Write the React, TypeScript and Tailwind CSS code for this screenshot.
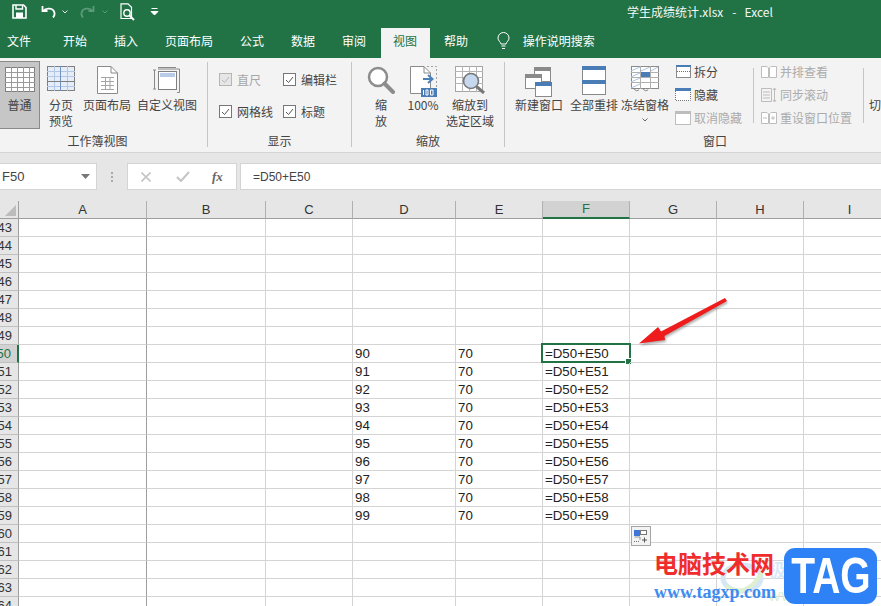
import React from "react";

const cjk = "font-['Microsoft_YaHei','Noto_Sans_CJK_SC',sans-serif]";

const tabs = ["开始", "插入", "页面布局", "公式", "数据", "审阅"];

const columns = [
  { name: "A", w: "w-[128px]", line: "border-[#9e9e9e]" },
  { name: "B", w: "w-[119px]", line: "border-[#d4d4d4]" },
  { name: "C", w: "w-[87px]", line: "border-[#d4d4d4]" },
  { name: "D", w: "w-[103px]", line: "border-[#d4d4d4]" },
  { name: "E", w: "w-[87px]", line: "border-[#d4d4d4]" },
  { name: "F", w: "w-[87px]", line: "border-[#d4d4d4]" },
  { name: "G", w: "w-[87px]", line: "border-[#d4d4d4]" },
  { name: "H", w: "w-[87px]", line: "border-[#d4d4d4]" },
  { name: "I", w: "w-[92px]", line: "border-[#d4d4d4]" },
];

const rows = Array.from({ length: 22 }, (_, i) => 43 + i);

const cellText = (col: string, row: number) => {
  if (row < 50 || row > 59) return "";
  if (col === "D") return String(row + 40);
  if (col === "E") return "70";
  if (col === "F") return `=D50+E${row}`;
  return "";
};

const GridIcon = () => (
  <svg width="30" height="25" viewBox="0 0 30 25">
    <rect x="0.5" y="0.5" width="29" height="24" fill="#fff" stroke="#7f7f7f" />
    {[5, 10, 15, 20].map((y) => (
      <path key={y} d={`M0 ${y}.5H30`} stroke="#9a9a9a" />
    ))}
    {[6, 12, 18, 24].map((x) => (
      <path key={x} d={`M${x}.5 0V25`} stroke="#9a9a9a" />
    ))}
  </svg>
);

const BreakIcon = () => (
  <svg width="28" height="25" viewBox="0 0 28 25">
    <rect x="0.5" y="0.5" width="27" height="24" fill="#e4edf8" stroke="#7f7f7f" />
    {[5, 10, 15, 20].map((y) => (
      <path key={y} d={`M0 ${y}.5H28`} stroke="#b3c7e4" />
    ))}
    {[7, 20].map((x) => (
      <path key={x} d={`M${x}.5 0V25`} stroke="#b3c7e4" />
    ))}
    <path d="M13.5 0V25" stroke="#6f93c6" />
    <path d="M0 15.5H28" stroke="#7f7f7f" />
  </svg>
);

const LayoutIcon = () => (
  <svg width="21" height="28" viewBox="0 0 21 28">
    <path d="M.5.5H14L20.5 7V27.5H.5Z" fill="#fff" stroke="#8a8a8a" />
    <path d="M14 .5V7H20.5" fill="none" stroke="#8a8a8a" />
    <path d="M4 11.5H17M4 15.5H17M4 19.5H17M4 23.5H17M8.5 11V24M13 11V24" stroke="#a5a5a5" />
  </svg>
);

const CustomIcon = () => (
  <svg width="28" height="28" viewBox="0 0 28 28">
    <path d="M5 1.5H23M1.5 4V23M.0 4H3M0 23H3M5 3H26.5V26.5H24" fill="none" stroke="#8a8a8a" />
    <rect x="5.5" y="5.5" width="18" height="18" fill="#fff" stroke="#7f7f7f" />
    <rect x="7" y="7" width="15" height="4" fill="#b8cce8" />
  </svg>
);

const Magnifier = () => (
  <svg width="28" height="28" viewBox="0 0 28 28">
    <circle cx="11" cy="11" r="9" fill="#fff" stroke="#8c8c8c" strokeWidth="2.5" />
    <path d="M17.5 17.5L26 26" stroke="#8c8c8c" strokeWidth="4" strokeLinecap="round" />
  </svg>
);

const HundredIcon = () => (
  <svg width="27" height="31" viewBox="0 0 27 31">
    <path d="M.5.5H14L20.5 7V27.5H.5Z" fill="#fff" stroke="#8a8a8a" />
    <path d="M14 .5V7H20.5" fill="none" stroke="#8a8a8a" />
    <path d="M17 .5H26.5V22" fill="none" stroke="#a0a0a0" strokeDasharray="2 2" />
    <path d="M13 13H21M18 9L22.5 13L18 17" fill="none" stroke="#4a7fb8" strokeWidth="2" />
    <rect x="11" y="22" width="16" height="9" fill="#4a7db5" />
    <path d="M13.5 24V29M16 24H18V29H16ZM20.5 24H23V29H20.5Z" fill="none" stroke="#fff" />
  </svg>
);

const ZoomSelIcon = () => (
  <svg width="30" height="28" viewBox="0 0 30 28">
    <rect x="0.5" y="0.5" width="27" height="25" fill="#fff" stroke="#a5a5a5" />
    <path d="M0 5.5H28M0 11.5H28M0 17.5H28M7.5 0V26M14.5 0V26M21.5 0V26" stroke="#b5b5b5" />
    <circle cx="16" cy="15" r="7.5" fill="#c5d8ee" stroke="#777" strokeWidth="1.6" />
    <path d="M21.5 20.5L29 27" stroke="#777" strokeWidth="3" />
  </svg>
);

const NewWinIcon = () => (
  <svg width="28" height="31" viewBox="0 0 28 31">
    <rect x="9.5" y="1.5" width="16" height="14" fill="#fff" stroke="#8a8a8a" />
    <rect x="9" y="1" width="17" height="4" fill="#8a8a8a" />
    <rect x="0.5" y="8.5" width="16" height="14" fill="#fff" stroke="#8a8a8a" />
    <rect x="0" y="8" width="17" height="4" fill="#8a8a8a" />
    <rect x="10.5" y="16.5" width="16" height="14" fill="#fff" stroke="#8a8a8a" />
    <rect x="10" y="16" width="17" height="4" fill="#4a7db5" />
  </svg>
);

const ArrangeIcon = () => (
  <svg width="24" height="29" viewBox="0 0 24 29">
    <rect x="0.5" y="0.5" width="23" height="28" fill="#fff" stroke="#8a8a8a" />
    <rect x="0" y="0" width="24" height="4" fill="#4a7db5" />
    <rect x="0" y="14" width="24" height="4" fill="#4a7db5" />
  </svg>
);

const FreezeIcon = () => (
  <svg width="28" height="26" viewBox="0 0 28 26">
    <rect x="0.5" y="0.5" width="27" height="22" fill="#fff" stroke="#8a8a8a" />
    <path d="M0 6.5H28M0 11.5H28M0 16.5H28M9.5 0V23M19.5 0V23" stroke="#b0b0b0" />
    <path d="M0 5L9 1M0 11L9 7M0 16L9 12M0 22L9 18M10 5L19 1M20 5L27 1" stroke="#a9c2e0" />
    <rect x="10" y="6" width="9" height="5" fill="#4a7db5" />
    <path d="M3 23Q5 26 8 24M12 23Q14 26 17 24" fill="none" stroke="#8a8a8a" />
  </svg>
);

const SplitIcon = () => (
  <svg width="15" height="13" viewBox="0 0 15 13">
    <rect x="0.5" y="0.5" width="14" height="12" fill="#fff" stroke="#8a8a8a" />
    <rect x="0" y="0" width="15" height="2" fill="#4a7db5" />
    <path d="M1 6.5H14" stroke="#4a7db5" strokeDasharray="1 1" />
  </svg>
);

const HideIcon = () => (
  <svg width="16" height="13" viewBox="0 0 16 13">
    <path d="M.5 3V12.5H15.5V3" fill="#fff" stroke="#777" strokeDasharray="1 1" />
    <rect x="0" y="0" width="16" height="3" fill="#4a7db5" />
  </svg>
);

const UnhideIcon = () => (
  <svg width="16" height="14" viewBox="0 0 16 14">
    <rect x="0.5" y="0.5" width="15" height="13" fill="#fff" stroke="#bdbdbd" />
    <rect x="0" y="0" width="16" height="3" fill="#bdbdbd" />
  </svg>
);

const SideBySideIcon = () => (
  <svg width="16" height="12" viewBox="0 0 16 12">
    <path d="M.5.5H6L7.5 2V11.5H.5ZM8.5 2L10 .5H15.5V11.5H8.5Z" fill="#fff" stroke="#bdbdbd" />
  </svg>
);

const SyncIcon = () => (
  <svg width="16" height="14" viewBox="0 0 16 14">
    <path d="M.5.5H10.5V13.5H.5ZM2 4H9M2 7H9M2 10H9" fill="none" stroke="#bdbdbd" />
    <path d="M13.5 0V14M12 2L13.5 0L15 2M12 12L13.5 14L15 12" fill="none" stroke="#bdbdbd" />
  </svg>
);

const ResetIcon = () => (
  <svg width="16" height="12" viewBox="0 0 16 12">
    <path d="M.5.5H6L7.5 2V11.5H.5ZM8.5 2L10 .5H15.5V11.5H8.5Z" fill="#fff" stroke="#bdbdbd" />
    <path d="M2 6H6M10 6H14M12 4V8" stroke="#bdbdbd" />
  </svg>
);

const Check = ({ label, off }: { label: string; off?: boolean }) => (
  <div className={`flex items-center gap-[5px] h-[13px] ${off ? "text-[#a6a6a6]" : "text-[#444]"}`}>
    <span className={`w-[13px] h-[13px] border flex items-center justify-center ${off ? "border-[#b5b5b5] bg-[#e6e6e6]" : "border-[#777] bg-white"}`}>
      <svg width="9" height="8" viewBox="0 0 9 8">
        <path d="M1 4L3.5 6.5L8 1" fill="none" stroke={off ? "#b5b5b5" : "#555"} />
      </svg>
    </span>
    <span className="whitespace-nowrap">{label}</span>
  </div>
);

const Big = ({ w, icon, label }: { w: string; icon: React.ReactNode; label: React.ReactNode }) => (
  <div className={`${w} shrink-0 flex flex-col items-center pt-[4px]`}>
    <div className="h-[30px] flex items-start justify-center">{icon}</div>
    <div className="text-center leading-[16px] mt-[1px] whitespace-nowrap">{label}</div>
  </div>
);

const Small = ({ icon, label, off }: { icon: React.ReactNode; label: string; off?: boolean }) => (
  <div className={`flex items-center gap-[3px] h-[23px] whitespace-nowrap ${off ? "text-[#ababab]" : "text-[#444]"}`}>
    <span className="w-[16px] flex justify-center">{icon}</span>
    <span>{label}</span>
  </div>
);

const Group = ({ w, label, labelPad = "", children, sep = true }: { w: string; label: string; labelPad?: string; children: React.ReactNode; sep?: boolean }) => (
  <div className={`${w} shrink-0 h-[85px] mt-[4px] flex flex-col ${sep ? "border-r border-[#c6c6c6]" : ""}`}>
    <div className="flex-1 flex min-h-0">{children}</div>
    <div className={`text-center leading-[16px] h-[16px] mb-[-2px] text-[#444] ${labelPad}`}>{label}</div>
  </div>
);

export default function App() {
  return (
    <div className={`relative w-[881px] h-[606px] overflow-hidden bg-[#e6e6e6] text-[12px] ${cjk}`}>
      {/* title bar */}
      <div className="h-[28px] pb-[5px] bg-[#217346] flex items-center text-white">
        <div className="w-[627px] shrink-0 flex items-center h-full">
          <svg className="ml-[12px]" width="15" height="15" viewBox="0 0 15 15">
            <path d="M1 1H11.5L14 3.5V14H1Z" fill="none" stroke="#fff" strokeWidth="1.6" />
            <path d="M4 1V5H10.5V1" fill="none" stroke="#fff" strokeWidth="1.4" />
            <rect x="4" y="8.5" width="7" height="5.5" fill="#fff" />
          </svg>
          <svg className="ml-[14px]" width="15" height="13" viewBox="0 0 15 13">
            <path d="M1.5 1V6H6.5" fill="none" stroke="#fff" strokeWidth="1.8" />
            <path d="M2 6C5 2.5 12.5 2.5 13.5 8C13.8 10 13 11.5 12 12.5" fill="none" stroke="#fff" strokeWidth="1.8" />
          </svg>
          <svg className="ml-[6px]" width="6" height="4" viewBox="0 0 6 4">
            <path d="M.5.5L3 3L5.5.5" fill="none" stroke="#dfe9e3" />
          </svg>
          <svg className="ml-[12px]" width="15" height="13" viewBox="0 0 15 13">
            <path d="M13.5 1V6H8.5" fill="none" stroke="#5d9a78" strokeWidth="1.8" />
            <path d="M13 6C10 2.5 2.5 2.5 1.5 8C1.2 10 2 11.5 3 12.5" fill="none" stroke="#5d9a78" strokeWidth="1.8" />
          </svg>
          <svg className="ml-[7px]" width="6" height="4" viewBox="0 0 6 4">
            <path d="M.5.5L3 3L5.5.5" fill="none" stroke="#5d9a78" />
          </svg>
          <svg className="ml-[12px]" width="15" height="18" viewBox="0 0 15 18">
            <path d="M1 .8H8L11.5 4.3V15.5H1Z" fill="none" stroke="#fff" strokeWidth="1.2" />
            <circle cx="7" cy="10" r="3.2" fill="none" stroke="#fff" strokeWidth="1.4" />
            <path d="M9.5 12.5L14 17" stroke="#fff" strokeWidth="1.8" />
          </svg>
          <svg className="ml-[15px]" width="9" height="8" viewBox="0 0 9 8">
            <path d="M1.5 .5H7.5M1 3.5H8L4.5 7Z" fill="#fff" stroke="#fff" />
          </svg>
        </div>
        <div className="whitespace-nowrap flex text-[#f2f7f4]">
          <span>学生成绩统计.xlsx</span>
          <span className="ml-[9px]">-</span>
          <span className="ml-[8px]">Excel</span>
        </div>
      </div>

      {/* tab strip */}
      <div className="h-[30px] bg-[#217346] flex items-stretch gap-[2px] text-white">
        <div className="w-[48.5px] pl-[7px] pt-[4px] leading-[18px]">文件</div>
        {tabs.map((t) => (
          <div key={t} className="px-[12.5px] pt-[4px] leading-[18px]">{t}</div>
        ))}
        <div className="px-[12.5px] pt-[4px] leading-[18px] bg-[#f3f3f3] text-[#217346]">视图</div>
        <div className="px-[12.5px] pt-[4px] leading-[18px]">帮助</div>
        <div className="flex items-start pt-[4px] ml-[14px] gap-[13px]">
          <svg width="13" height="18" viewBox="0 0 13 18">
            <path d="M4 12C3.5 9.5 1 9 1 6A5.5 5.5 0 0 1 12 6C12 9 9.5 9.5 9 12ZM4.5 14H8.5M5 16.5H8" fill="none" stroke="#fff" />
          </svg>
          <span className="leading-[18px]">操作说明搜索</span>
        </div>
      </div>

      {/* ribbon */}
      <div className="h-[95px] bg-[#f3f3f3] border-b border-[#d4d4d4] flex text-[#444]">
        <Group w="w-[208px]" label="工作簿视图" labelPad="pr-[12px]">
          <div className="w-[40px] shrink-0 -mt-[1px] h-[68px] bg-[#c6c6c6] border border-[#8a8a8a] border-l-0 flex flex-col items-center pt-[5px]">
            <GridIcon />
            <div className="mt-[5px] leading-[16px]">普通</div>
          </div>
          <Big w="w-[42px]" icon={<BreakIcon />} label={<>分页<br />预览</>} />
          <Big w="w-[50px]" icon={<LayoutIcon />} label="页面布局" />
          <Big w="w-[70px]" icon={<CustomIcon />} label="自定义视图" />
        </Group>
        <Group w="w-[144px]" label="显示">
          <div className="w-[65px] shrink-0 pl-[11px] pt-[11px] flex flex-col gap-[19px]">
            <Check label="直尺" off />
            <Check label="网格线" />
          </div>
          <div className="pl-[10px] pt-[11px] flex flex-col gap-[19px]">
            <Check label="编辑栏" />
            <Check label="标题" />
          </div>
        </Group>
        <Group w="w-[153px]" label="缩放">
          <div className="w-[10px] shrink-0" />
          <Big w="w-[38px]" icon={<Magnifier />} label={<>缩<br />放</>} />
          <Big w="w-[46px]" icon={<HundredIcon />} label="100%" />
          <Big w="w-[48px]" icon={<ZoomSelIcon />} label={<>缩放到<br />选定区域</>} />
        </Group>
        <Group w="w-[376px]" label="窗口" labelPad="pl-[44px]" sep={false}>
          <div className="w-[5px] shrink-0" />
          <Big w="w-[58px]" icon={<NewWinIcon />} label="新建窗口" />
          <Big w="w-[52px]" icon={<ArrangeIcon />} label="全部重排" />
          <Big
            w="w-[50px]"
            icon={<FreezeIcon />}
            label={
              <>
                冻结窗格
                <svg className="mx-auto mt-[5px]" width="6" height="4" viewBox="0 0 6 4">
                  <path d="M.5.5L3 3L5.5.5" fill="none" stroke="#666" />
                </svg>
              </>
            }
          />
          <div className="w-[83px] shrink-0 pl-[5px] -mt-[2px]">
            <Small icon={<SplitIcon />} label="拆分" />
            <Small icon={<HideIcon />} label="隐藏" />
            <Small icon={<UnhideIcon />} label="取消隐藏" off />
          </div>
          <div className="w-px h-[55px] mt-[6px] shrink-0 bg-[#c6c6c6]" />
          <div className="w-[109px] shrink-0 pl-[7px] -mt-[2px]">
            <Small icon={<SideBySideIcon />} label="并排查看" off />
            <Small icon={<SyncIcon />} label="同步滚动" off />
            <Small icon={<ResetIcon />} label="重设窗口位置" off />
          </div>
          <div className="w-px h-[55px] mt-[6px] shrink-0 bg-[#c6c6c6]" />
          <div className="pl-[5px] pt-[35px] leading-[16px]">切</div>
        </Group>
      </div>

      {/* formula bar */}
      <div className="h-[27px] mt-[10px] flex text-[12px] font-['Liberation_Sans',sans-serif]">
        <div className="w-[97px] shrink-0 bg-white border border-[#d4d4d4] border-l-0 flex items-center justify-between pl-[2px] pr-[6px] text-[13px] text-[#444]">
          <span>F50</span>
          <svg width="9" height="5" viewBox="0 0 9 5"><path d="M0 0H9L4.5 5Z" fill="#777" /></svg>
        </div>
        <div className="w-[30px] shrink-0 flex flex-col items-center justify-center gap-[2px]">
          <span className="w-[2px] h-[2px] bg-[#aaa]" />
          <span className="w-[2px] h-[2px] bg-[#aaa]" />
          <span className="w-[2px] h-[2px] bg-[#aaa]" />
        </div>
        <div className="w-[110px] shrink-0 bg-white border border-[#d4d4d4] flex items-center pl-[13px]">
          <svg width="10" height="10" viewBox="0 0 10 10"><path d="M.5.5L9.5 9.5M9.5.5L.5 9.5" stroke="#c4c4c4" strokeWidth="1.6" /></svg>
          <svg className="ml-[25px]" width="14" height="11" viewBox="0 0 14 11"><path d="M1 6L5 10L13 1" fill="none" stroke="#c4c4c4" strokeWidth="2" /></svg>
          <span className="ml-[22px] font-['Liberation_Serif',serif] italic font-bold text-[13px] text-[#666]">fx</span>
        </div>
        <div className="flex-1 ml-[3px] bg-white border border-[#d4d4d4] border-r-0 flex items-center pl-[12px] text-[#444]">=D50+E50</div>
      </div>

      {/* sheet */}
      <div className="mt-[11px] font-['Liberation_Sans',sans-serif] text-[13.3px] text-[#222] bg-white">
        <div className="flex h-[18px] bg-[#e6e6e6] text-[13px] text-[#333]">
          <div className="w-[19px] shrink-0 border-r border-b border-[#9e9e9e] flex items-end justify-end p-[2px]">
            <svg width="11" height="11" viewBox="0 0 11 11"><path d="M11 0V11H0Z" fill="#bcbcbc" /></svg>
          </div>
          {columns.map((c) => (
            <div
              key={c.name}
              className={`${c.w} shrink-0 border-r flex items-center justify-center ${
                c.name === "F"
                  ? "bg-[#d2d2d2] text-[#217346] border-[#b0b0b0] border-b-2 border-b-[#217346]"
                  : "border-[#b0b0b0] border-b border-b-[#9e9e9e]"
              }`}
            >
              {c.name}
            </div>
          ))}
        </div>
        {rows.map((r) => (
          <div key={r} className="flex h-[18px]">
            <div
              className={`w-[19px] shrink-0 overflow-hidden whitespace-nowrap flex items-center justify-end pr-[6px] border-b border-[#c0c0c0] text-[13px] ${
                r === 50
                  ? "bg-[#d2d2d2] text-[#217346] border-r-2 border-r-[#217346]"
                  : "bg-[#e6e6e6] border-r border-r-[#9e9e9e] text-[#333]"
              }`}
            >
              {r}
            </div>
            {columns.map((c) => (
              <div key={c.name} className={`${c.w} shrink-0 relative border-r ${c.line} border-b border-b-[#d4d4d4] pl-[2px] leading-[17px]`}>
                {cellText(c.name, r)}
                {r === 50 && c.name === "F" && (
                  <div className="absolute -left-[2px] -right-[2px] -top-[2px] -bottom-[1px] border-2 border-[#217346]">
                    <span className="absolute -right-[3px] -bottom-[4px] w-[5px] h-[5px] bg-[#217346] border border-white box-content" />
                  </div>
                )}
              </div>
            ))}
          </div>
        ))}
      </div>

      {/* paste options */}
      <div className="absolute left-[631px] top-[526px] w-[20px] h-[20px] bg-[#f3f3f3] border border-[#a5a5a5] flex items-center justify-center">
        <svg width="14" height="14" viewBox="0 0 14 14">
          <rect x="0" y="1" width="6" height="6" fill="#3f74d8" />
          <rect x="6.5" y="1.5" width="6" height="4" fill="#fff" stroke="#777" />
          <path d="M.5 8H6V11" fill="none" stroke="#999" />
          <path d="M0 12.5H6" stroke="#777" strokeDasharray="1 1" />
          <path d="M8 11H13M10.5 8.5V13.5" stroke="#555" />
        </svg>
      </div>

      {/* annotation arrow */}
      <svg className="absolute left-[630px] top-[290px] drop-shadow-[1px_2px_1px_rgba(0,0,0,0.3)]" width="110" height="70" viewBox="630 290 110 70">
        <polygon points="639,343.5 658,327 661,331.5 725,298 727,301 664.5,336 665,340" fill="#ee1c1c" />
      </svg>

      {/* watermark */}
      <svg className="absolute left-[720px] top-[558px]" width="48" height="42" viewBox="0 0 48 42">
        <ellipse cx="22" cy="20" rx="19" ry="13" fill="none" stroke="#d5e7f5" strokeWidth="5" />
        <path d="M6 28Q26 42 42 14" fill="none" stroke="#dff0d0" strokeWidth="4" />
      </svg>
      <div className="absolute left-[768px] top-[559px] whitespace-nowrap text-[18px] leading-[20px] font-bold text-[#dbe9f6]">极光下载站</div>
      <div className="absolute left-[768px] top-[584px] whitespace-nowrap text-[16px] leading-[20px] text-[#dcefd6]">www.xz7.com</div>
      <div className="absolute left-[654px] top-[549px] leading-[28px] text-[24px] font-bold text-[#f02c2c] font-['Noto_Sans_CJK_SC',sans-serif]">电脑技术网</div>
      <div className="absolute left-[654px] top-[582px] leading-[20px] text-[18px] font-bold text-[#3d8bf0] font-['Liberation_Serif',serif]">www.tagxp.com</div>
      <div className="absolute left-[784px] top-[548px] w-[93px] h-[56px] rounded-[11px] bg-[#2f82f5] flex items-center justify-center text-white font-bold text-[50px] leading-none font-['Liberation_Sans',sans-serif]">
        <span className="scale-x-[0.78]">TAG</span>
      </div>
    </div>
  );
}
